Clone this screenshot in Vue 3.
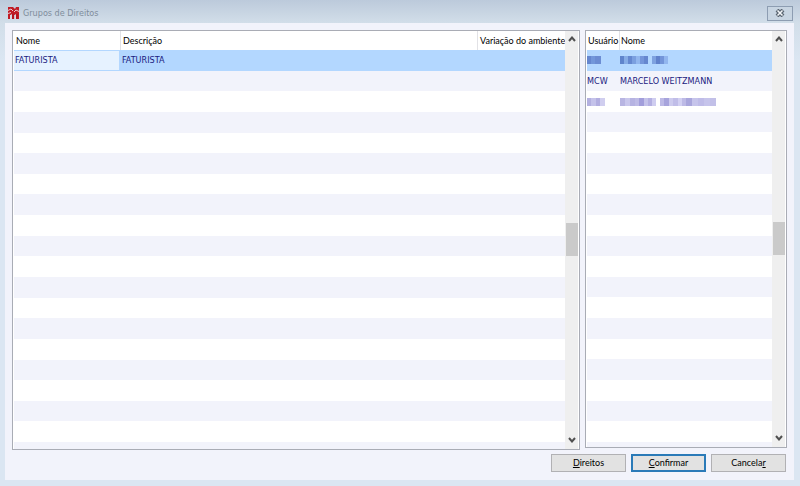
<script setup>
import { ref } from 'vue'

const rowNumbers = Array.from({ length: 20 }, (_, i) => i)
const groups = [{ name: 'FATURISTA', description: 'FATURISTA' }]
const selectedUser = [[0, 4, '#6687cf'], [4, 4, '#7397da'], [8, 6, '#6c8dd3']]
const selectedName = [
  [0, 4, '#5f84cc'], [4, 4, '#86ace6'], [8, 4, '#6588d0'], [12, 4, '#7b9fdf'], [16, 4, '#92b6ee'], [20, 4, '#7596da'], [24, 4, '#6687cf'],
  [32, 4, '#7ea2e0'], [36, 4, '#6082cc'], [40, 4, '#7395d9'], [44, 4, '#92b6ee']
]
const otherUser = [[0, 4, '#b3b0e0'], [4, 5, '#c4c2ea'], [9, 4, '#b2aee0'], [13, 5, '#d0ceef']]
const otherName = [
  [0, 5, '#b8b5e2'], [5, 5, '#c9c7ec'], [10, 5, '#b6b3e2'], [15, 4, '#bebbe6'], [19, 5, '#a29edb'], [24, 4, '#c4c2ea'],
  [28, 4, '#b4b0e2'], [32, 4, '#cfcdf0'], [40, 4, '#bdbae6'], [44, 5, '#a7a4dc'], [49, 4, '#cdcbee'], [53, 5, '#c0bde8'],
  [58, 4, '#d2d0f2'], [62, 4, '#bdbae6'], [66, 6, '#a9a6dc'], [72, 6, '#c6c4eb'], [78, 6, '#bfbce8'], [84, 6, '#c6c4eb'], [90, 6, '#c2c0e8']
]
const users = [
  { code: selectedUser, name: selectedName, masked: true },
  { code: 'MCW', name: 'MARCELO WEITZMANN' },
  { code: otherUser, name: otherName, masked: true }
]
const selected = ref(0)
</script>

<template>
  <main class="window">
    <header class="titlebar">
      <svg class="logo" viewBox="0 0 11 12" aria-hidden="true">
        <path d="M0 0H5L7 2L8 0H11V12H8V7L6.500 8V12H4V7L2.500 8V12H0Z" fill="#c01c26" />
        <path d="M0 3.500L3 2L5 4M6 5L8 3L11 4.500M0 6.500L3 5.500" fill="none" stroke="#e9c9d0" />
        <path d="M2.500 8V12M6.800 8V12" fill="none" stroke="#e9d5dc" stroke-width="1" />
        <path d="M4 7H6V12H4ZM8 7H10V12H8Z" fill="#b5141e" />
      </svg>
      <h1>Grupos de Direitos</h1>
      <button class="close" aria-label="Fechar">
        <svg viewBox="0 0 10 8"><path d="M2 1L8 7M8 1L2 7" stroke="#5b6672" stroke-width="4" /><path d="M2.500 1.500L7.500 6.500M7.500 1.500L2.500 6.500" stroke="#f4f7fa" stroke-width="1.500" /></svg>
      </button>
    </header>
    <div class="client">
      <div class="panels">
        <section class="panel groups">
          <table>
            <thead><tr><th>Nome</th><th>Descrição</th><th>Variação do ambiente</th></tr></thead>
            <tbody>
              <tr v-for="i in rowNumbers" :key="i" :class="{ selected: i === 0 }">
                <td :class="{ focus: i === 0 }">{{ groups[i]?.name }}</td><td>{{ groups[i]?.description }}</td><td></td>
              </tr>
            </tbody>
          </table>
          <div class="scroll">
            <svg viewBox="0 0 8 6"><path d="M1 5L4 1.500L7 5" /></svg>
            <i></i>
            <svg viewBox="0 0 8 6"><path d="M1 1L4 4.500L7 1" /></svg>
          </div>
        </section>
        <section class="panel users">
          <table>
            <thead><tr><th>Usuário</th><th>Nome</th></tr></thead>
            <tbody>
              <tr v-for="i in rowNumbers" :key="i" :class="{ selected: i === selected }">
                <template v-if="users[i]?.masked">
                  <td v-for="(cells, c) in [users[i].code, users[i].name]" :key="c">
                    <svg class="mask" viewBox="0 0 100 8" aria-hidden="true"><rect v-for="b in cells" :key="b[0]" :x="b[0]" :width="b[1]" height="8" :fill="b[2]" /></svg>
                  </td>
                </template>
                <template v-else><td>{{ users[i]?.code }}</td><td>{{ users[i]?.name }}</td></template>
              </tr>
            </tbody>
          </table>
          <div class="scroll">
            <svg viewBox="0 0 8 6"><path d="M1 5L4 1.500L7 5" /></svg>
            <i></i>
            <svg viewBox="0 0 8 6"><path d="M1 1L4 4.500L7 1" /></svg>
          </div>
        </section>
      </div>
      <footer>
        <button><u>D</u>ireitos</button>
        <button class="primary"><u>C</u>onfirmar</button>
        <button>Cancela<u>r</u></button>
      </footer>
    </div>
  </main>
</template>

<style>
body { margin: 0; }
</style>
<style scoped>
* { box-sizing: border-box; }
.window {
  display: flex; flex-direction: column; min-height: 100vh; padding: 0 6px 6px 5px;
  background: linear-gradient(#bccadb, #d2dee9 23px, #dbe6f2 60px);
  font: 9px/12px Lato, sans-serif; color: #000;
}
.titlebar { display: flex; align-items: center; height: 23px; padding: 3px 1px 0 3px; }
.logo { width: 11px; height: 12px; }
h1 { flex: 1; margin: 0 0 0 4px; font: 9px/14px "DejaVu Sans Condensed", sans-serif; color: #7f8d9b; }
.close { display: grid; place-items: center; width: 26px; height: 15px; padding: 0; border: 1px solid #8d9db2; background: #c8d5e2; }
.close svg { width: 10px; height: 8px; fill: none; }
.client { flex: 1; display: flex; flex-direction: column; padding: 7px 7px 8px; background: #f2f3fb; }
.panels { flex: 1; display: flex; gap: 5px; }
.panel { display: flex; border: 1px solid #a9acb5; background: #fff; padding: 0 1px; }
.groups { flex: 1; }
.users { width: 202px; margin-bottom: 2px; }
table { flex: 1; display: flex; flex-direction: column; }
tr { display: grid; grid-template-columns: 107px 1fr 87px; align-items: stretch; }
.users tr { grid-template-columns: 33px 1fr; }
thead tr { height: 19px; }
th { padding: 4px 2px 0; text-align: left; font-weight: 400; border-right: 1px solid #e2e2e6; white-space: nowrap; }
.users th { padding: 4px 1px 0; }
th:last-child { border: 0; }
tbody { flex: 1; display: grid; grid-template-rows: repeat(19, 3fr) 1fr; color: #1a1a80; }
.users tbody { grid-template-rows: repeat(19, 4fr) 1fr; }
tbody tr { min-height: 0; overflow: hidden; }
tbody tr:nth-child(even) { background: #f2f3fb; }
tbody tr.selected { background: #b3d7ff; }
td { display: flex; align-items: center; padding: 0 1px; white-space: nowrap; font-family: "DejaVu Sans Condensed", sans-serif; min-width: 0; }
.focus { margin: 1px 2px 1px 0; background: #e6f2ff; }
.mask { flex: none; width: 100px; height: 8px; }
.users td { padding: 0; }
.scroll { display: grid; grid-template-rows: 16px 1fr 18px; width: 13px; background: #efefef; place-items: center; }
.scroll svg { width: 8px; height: 6px; }
.scroll path { fill: none; stroke: #505050; stroke-width: 2; }
.scroll i { width: 12px; height: 33px; background: #cacaca; }
footer { display: flex; justify-content: flex-end; gap: 5px; padding: 4px 1px 0 0; }
footer button { width: 75px; height: 18px; padding: 0; border: 1px solid #b1b1b4; background: #e2e2e2; font: inherit; color: #000; }
footer .primary { border: 2px solid #2a7ab8; }
</style>
